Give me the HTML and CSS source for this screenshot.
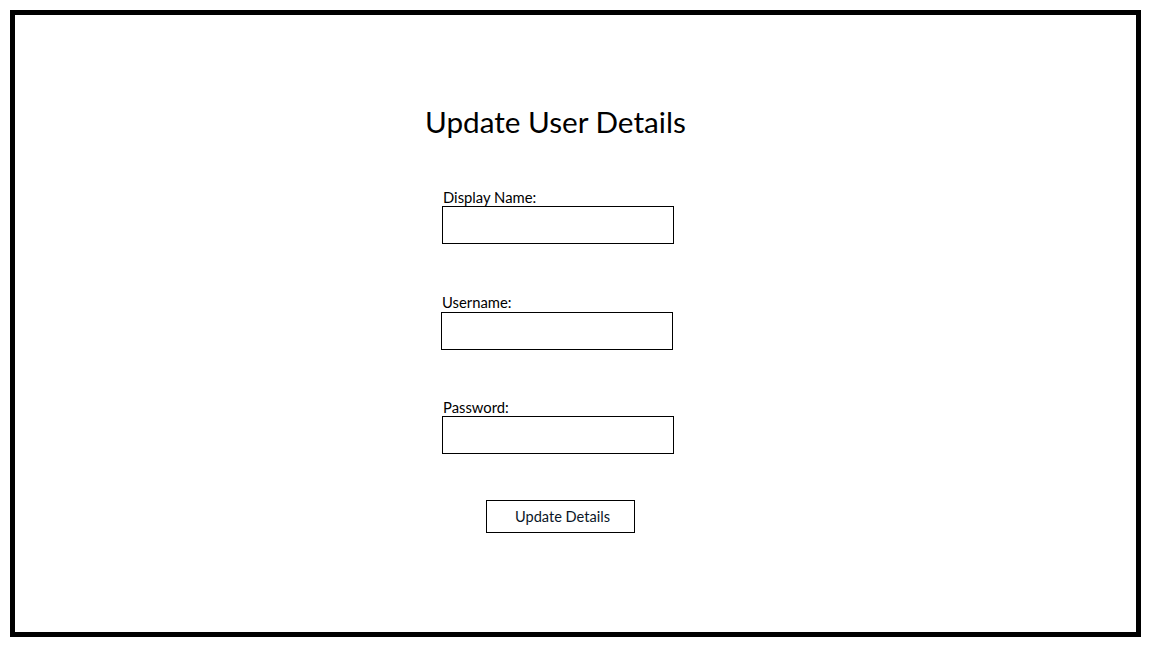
FILE: index.html
```html
<!DOCTYPE html>
<html>
<head>
<meta charset="utf-8">
<link rel="stylesheet" href="styles.css">
</head>
<body>
<div class="frame">
  <div class="form">
    <h1 class="title">Update User Details</h1>
    <div class="field field-display">
      <label class="label">Display Name:</label>
      <input class="input" type="text">
    </div>
    <div class="field field-user">
      <label class="label">Username:</label>
      <input class="input" type="text">
    </div>
    <div class="field field-pass">
      <label class="label">Password:</label>
      <input class="input" type="password">
    </div>
    <button class="button">Update Details</button>
  </div>
</div>
</body>
</html>
```
FILE: styles.css
```css
html, body {
  margin: 0;
  padding: 0;
  background: #fff;
}
body {
  font-family: Lato, "Liberation Sans", sans-serif;
  color: #000;
}
.frame {
  box-sizing: border-box;
  margin: 10px;
  width: 1131px;
  height: 627px;
  border: 5px solid #000;
}
.form {
  display: flex;
  flex-direction: column;
  align-items: flex-start;
  padding-top: 89px;
  padding-left: 410px;
}
.title {
  margin: 0;
  font-size: 29.7px;
  line-height: 36px;
  font-weight: 400;
}
.field {
  display: flex;
  flex-direction: column;
  align-items: flex-start;
  margin-left: 17px;
}
.field-display { margin-top: 50px; }
.field-user { margin-top: 51px; margin-left: 16px; }
.field-pass { margin-top: 50px; }
.label {
  font-size: 14.8px;
  line-height: 16px;
  padding-left: 1px;
  margin-bottom: 0;
  position: relative;
  top: -1px;
}
.field-user .label { margin-bottom: 1px; }
.input {
  box-sizing: border-box;
  width: 232px;
  height: 38px;
  border: 1px solid #000;
  margin: 0;
  padding: 0 6px;
  background: #fff;
  outline: none;
}
.button {
  box-sizing: border-box;
  margin-top: 46px;
  margin-left: 61px;
  width: 149px;
  height: 33px;
  border: 1px solid #000;
  background: #fff;
  font-family: Lato, "Liberation Sans", sans-serif;
  font-size: 14.6px;
  color: #0a1628;
  padding: 0 0 0 4px;
}
```
